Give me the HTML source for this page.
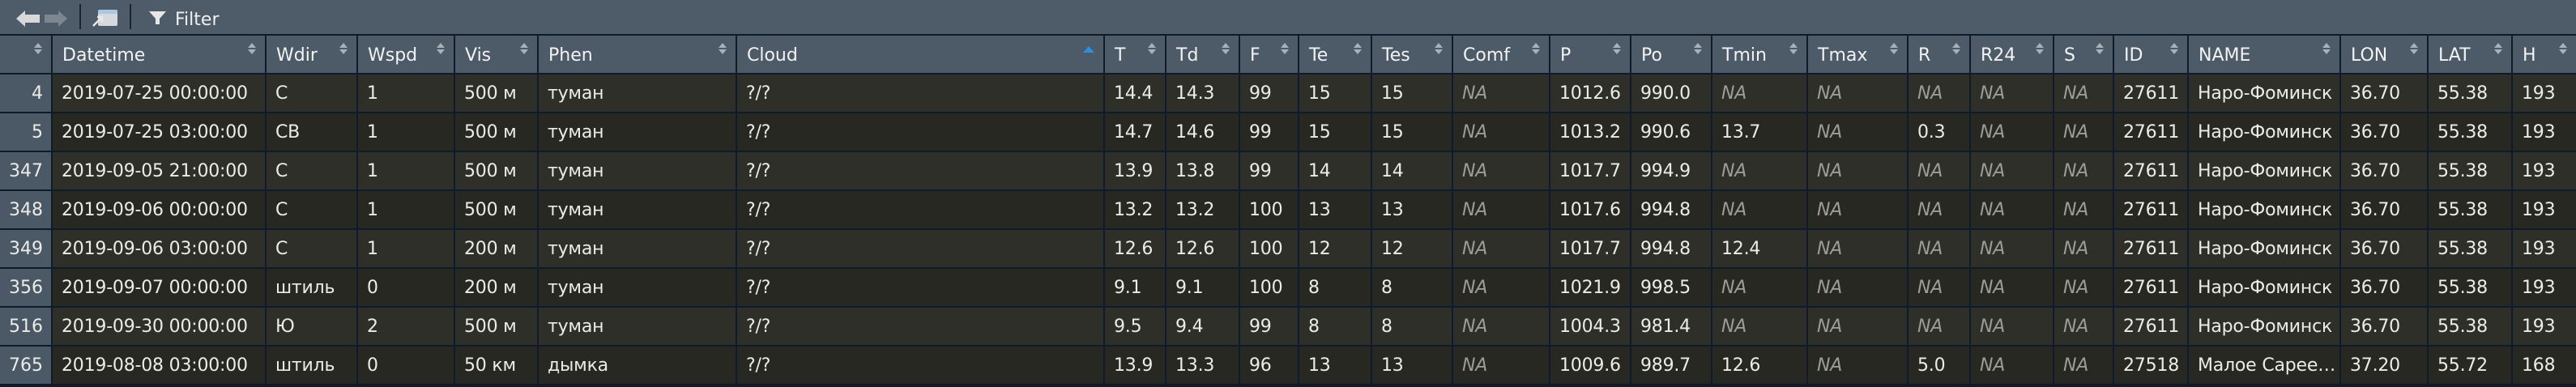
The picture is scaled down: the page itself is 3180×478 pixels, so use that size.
<!DOCTYPE html>
<html><head><meta charset="utf-8"><style>
*{margin:0;padding:0;box-sizing:border-box}
html,body{width:3180px;height:478px;overflow:hidden;background:#0d1b2a}
body{font-family:"DejaVu Sans","Liberation Sans",sans-serif;font-size:22px;color:#ecebe6}
#tb{position:absolute;left:0;top:0;width:3180px;height:42px;background:#4e5b68}
#grid{position:absolute;left:0;top:44px;display:grid;column-gap:2px;row-gap:2px;
grid-template-columns:63px 262px 111px 118px 101px 243px 452px 74px 89px 71px 88px 98px 118px 98px 98px 116px 122px 75px 101px 72px 90px 186px 106px 102px 78px;
grid-template-rows:46px repeat(8,46px)}
.h{background:#4d5a68;position:relative;padding:0 0 0 12px;line-height:50px;white-space:nowrap;overflow:hidden;color:#f2f2f2}
.h.s::after{content:"";position:absolute;right:11px;top:9px;width:0;height:0;border-left:5px solid transparent;border-right:5px solid transparent;border-bottom:6px solid #a8b0b8}
.h.s::before{content:"";position:absolute;right:11px;top:17px;width:0;height:0;border-left:5px solid transparent;border-right:5px solid transparent;border-top:6px solid #a8b0b8}
.h.up::after{content:"";position:absolute;right:11px;top:13px;width:0;height:0;border-left:7px solid transparent;border-right:7px solid transparent;border-bottom:8px solid #2b8ee0}
.c{padding-left:11px;line-height:48px;white-space:nowrap;overflow:hidden;letter-spacing:-0.2px}
.n{background:#4b5866;text-align:right;padding-right:10px;line-height:48px}
.na{font-style:italic;color:#9c9c98}
</style></head><body>
<div id="tb">
<svg width="300" height="42" style="position:absolute;left:0;top:0">
<path d="M20 23 L31 13 L31 18 L49 18 L49 28 L31 28 L31 33 Z" fill="#d8d8d8"/>
<path d="M83 23 L72 13 L72 18 L55 18 L55 28 L72 28 L72 33 Z" fill="#7b8691"/>
<rect x="98" y="5" width="2" height="31" fill="#1a2430"/>
<rect x="121" y="12" width="24" height="20" rx="2" fill="#d5d9dd"/>
<rect x="121" y="12" width="24" height="5" rx="2" fill="#a9c8e6"/>
<path d="M115 32 L126 21 M120 21 L126 21 L126 27" stroke="#e8e8e8" stroke-width="2.5" fill="none"/>
<rect x="160" y="5" width="2" height="31" fill="#1a2430"/>
<path d="M184 14 L205 14 L197 23 L197 30 L192 30 L192 23 Z" fill="#e6e6e6"/>
<text x="216" y="31" font-family="DejaVu Sans, sans-serif" font-size="22" fill="#f0f0f0">Filter</text>
</svg>
</div>
<div id="grid">
<div class="h s"></div><div class="h s">Datetime</div><div class="h s">Wdir</div><div class="h s">Wspd</div><div class="h s">Vis</div><div class="h s">Phen</div><div class="h up">Cloud</div><div class="h s">T</div><div class="h s">Td</div><div class="h s">F</div><div class="h s">Te</div><div class="h s">Tes</div><div class="h s">Comf</div><div class="h s">P</div><div class="h s">Po</div><div class="h s">Tmin</div><div class="h s">Tmax</div><div class="h s">R</div><div class="h s">R24</div><div class="h s">S</div><div class="h s">ID</div><div class="h s">NAME</div><div class="h s">LON</div><div class="h s">LAT</div><div class="h s">H</div>
</div>
<script>
var rows=[
["4","2019-07-25 00:00:00","С","1","500 м","туман","?/?","14.4","14.3","99","15","15","NA","1012.6","990.0","NA","NA","NA","NA","NA","27611","Наро-Фоминск","36.70","55.38","193"],
["5","2019-07-25 03:00:00","СВ","1","500 м","туман","?/?","14.7","14.6","99","15","15","NA","1013.2","990.6","13.7","NA","0.3","NA","NA","27611","Наро-Фоминск","36.70","55.38","193"],
["347","2019-09-05 21:00:00","С","1","500 м","туман","?/?","13.9","13.8","99","14","14","NA","1017.7","994.9","NA","NA","NA","NA","NA","27611","Наро-Фоминск","36.70","55.38","193"],
["348","2019-09-06 00:00:00","С","1","500 м","туман","?/?","13.2","13.2","100","13","13","NA","1017.6","994.8","NA","NA","NA","NA","NA","27611","Наро-Фоминск","36.70","55.38","193"],
["349","2019-09-06 03:00:00","С","1","200 м","туман","?/?","12.6","12.6","100","12","12","NA","1017.7","994.8","12.4","NA","NA","NA","NA","27611","Наро-Фоминск","36.70","55.38","193"],
["356","2019-09-07 00:00:00","штиль","0","200 м","туман","?/?","9.1","9.1","100","8","8","NA","1021.9","998.5","NA","NA","NA","NA","NA","27611","Наро-Фоминск","36.70","55.38","193"],
["516","2019-09-30 00:00:00","Ю","2","500 м","туман","?/?","9.5","9.4","99","8","8","NA","1004.3","981.4","NA","NA","NA","NA","NA","27611","Наро-Фоминск","36.70","55.38","193"],
["765","2019-08-08 03:00:00","штиль","0","50 км","дымка","?/?","13.9","13.3","96","13","13","NA","1009.6","989.7","12.6","NA","5.0","NA","NA","27518","Малое Сарее…","37.20","55.72","168"]];
var g=document.getElementById('grid'),h='';
rows.forEach(function(r,i){var bg=i%2?'#282823':'#2f2f2a';
r.forEach(function(v,j){if(j==0)h+='<div class="n">'+v+'</div>';else h+='<div class="c'+(v=='NA'?' na':'')+'" style="background:'+bg+'">'+v+'</div>';});});
g.insertAdjacentHTML('beforeend',h);
</script>
</body></html>
